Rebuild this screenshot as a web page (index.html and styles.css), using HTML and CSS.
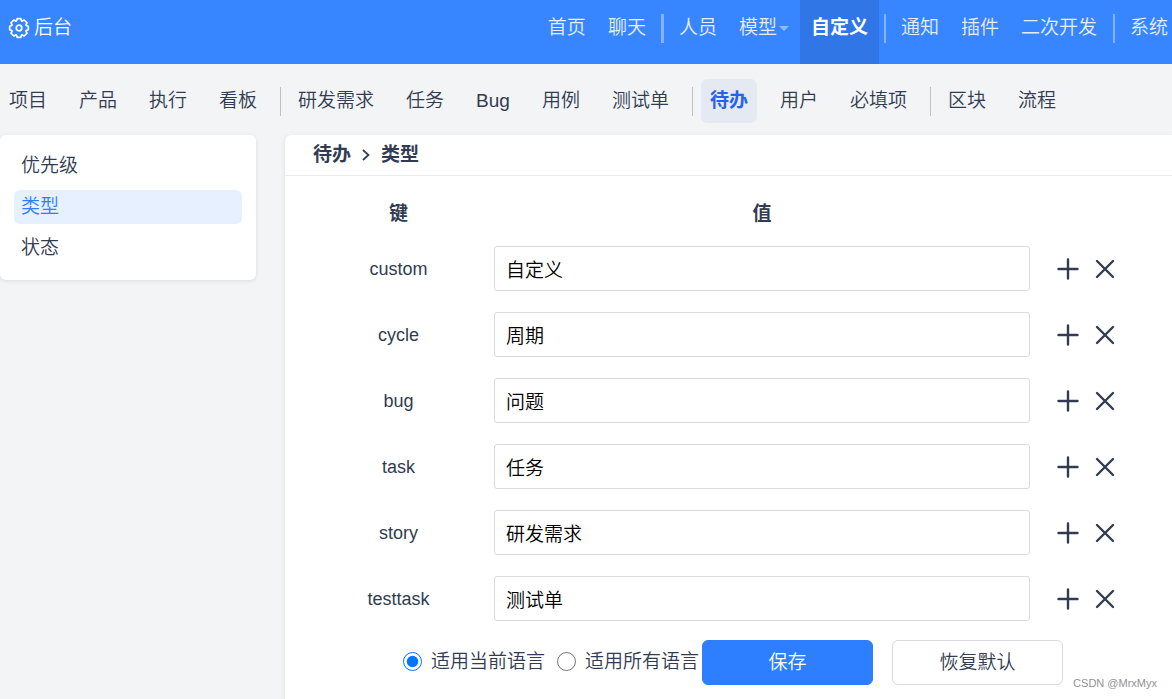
FILE: index.html
```html
<!DOCTYPE html>
<html lang="zh-CN">
<head>
<meta charset="utf-8">
<meta name="viewport" content="width=device-width, initial-scale=1">
<title>后台 - 自定义</title>
<link rel="stylesheet" href="styles.css">
</head>
<body>
<svg class="symbols" aria-hidden="true">
  <symbol id="plus" viewBox="0 0 22 22"><path d="M11 1.500v19M1.500 11h19" fill="none" stroke="currentColor" stroke-width="2.400" stroke-linecap="round"/></symbol>
  <symbol id="close" viewBox="0 0 22 22"><path d="M3 3l16 16M19 3L3 19" fill="none" stroke="currentColor" stroke-width="2.400" stroke-linecap="round"/></symbol>
</svg>
<header class="topbar">
  <a class="brand" href="#">
    <svg class="gear" viewBox="0 0 22 22" aria-hidden="true"><g fill="none" stroke="currentColor" stroke-width="1.700" stroke-linejoin="round"><path d="M8.400 3.900L9.200 1.700H12.800L13.600 3.900L14.200 4.100L16.200 3L19 5.800L17.900 7.800L18.100 8.400L20.300 9.200V12.800L18.100 13.600L17.900 14.200L19 16.200L16.200 19L14.200 17.900L13.600 18.100L12.800 20.300H9.200L8.400 18.100L7.800 17.900L5.800 19L3 16.200L4.100 14.200L3.900 13.600L1.700 12.800V9.200L3.900 8.400L4.100 7.800L3 5.800L5.800 3L7.800 4.100z"/><circle cx="11" cy="11" r="2.800"/></g></svg>
    <span>后台</span>
  </a>
  <nav class="topnav">
    <a href="#">首页</a>
    <a href="#">聊天</a>
    <span class="topsep topsep-wide"></span>
    <a href="#">人员</a>
    <a href="#">模型<i class="caret"></i></a>
    <a href="#" class="active">自定义</a>
    <span class="topsep"></span>
    <a href="#">通知</a>
    <a href="#">插件</a>
    <a href="#">二次开发</a>
    <span class="topsep"></span>
    <a href="#" class="last">系统</a>
  </nav>
</header>
<nav class="subnav">
  <a href="#">项目</a>
  <a href="#">产品</a>
  <a href="#">执行</a>
  <a href="#">看板</a>
  <span class="subsep"></span>
  <a href="#">研发需求</a>
  <a href="#">任务</a>
  <a href="#">Bug</a>
  <a href="#">用例</a>
  <a href="#">测试单</a>
  <span class="subsep"></span>
  <a href="#" class="active">待办</a>
  <a href="#">用户</a>
  <a href="#">必填项</a>
  <span class="subsep"></span>
  <a href="#">区块</a>
  <a href="#">流程</a>
</nav>
<div class="layout">
  <aside class="sidebar">
    <a href="#">优先级</a>
    <a href="#" class="active">类型</a>
    <a href="#">状态</a>
  </aside>
  <main class="panel">
    <h1 class="panel-head">
      <span>待办</span>
      <svg class="chevron" viewBox="0 0 8 12" aria-hidden="true"><path d="M1 1L6.500 6L1 11" fill="none" stroke="currentColor" stroke-width="1.700"/></svg>
      <span>类型</span>
    </h1>
    <form class="panel-body">
      <table class="items">
        <colgroup><col class="col-key"><col><col class="col-actions"></colgroup>
        <thead><tr><th>键</th><th>值</th><td></td></tr></thead>
        <tbody>
          <tr><td class="key"><label for="v1">custom</label></td><td class="value"><input type="text" id="v1" value="自定义"></td><td class="actions"><div><button type="button" aria-label="添加"><svg><use href="#plus"/></svg></button><button type="button" aria-label="删除"><svg><use href="#close"/></svg></button></div></td></tr>
          <tr><td class="key"><label for="v2">cycle</label></td><td class="value"><input type="text" id="v2" value="周期"></td><td class="actions"><div><button type="button" aria-label="添加"><svg><use href="#plus"/></svg></button><button type="button" aria-label="删除"><svg><use href="#close"/></svg></button></div></td></tr>
          <tr><td class="key"><label for="v3">bug</label></td><td class="value"><input type="text" id="v3" value="问题"></td><td class="actions"><div><button type="button" aria-label="添加"><svg><use href="#plus"/></svg></button><button type="button" aria-label="删除"><svg><use href="#close"/></svg></button></div></td></tr>
          <tr><td class="key"><label for="v4">task</label></td><td class="value"><input type="text" id="v4" value="任务"></td><td class="actions"><div><button type="button" aria-label="添加"><svg><use href="#plus"/></svg></button><button type="button" aria-label="删除"><svg><use href="#close"/></svg></button></div></td></tr>
          <tr><td class="key"><label for="v5">story</label></td><td class="value"><input type="text" id="v5" value="研发需求"></td><td class="actions"><div><button type="button" aria-label="添加"><svg><use href="#plus"/></svg></button><button type="button" aria-label="删除"><svg><use href="#close"/></svg></button></div></td></tr>
          <tr><td class="key"><label for="v6">testtask</label></td><td class="value"><input type="text" id="v6" value="测试单"></td><td class="actions"><div><button type="button" aria-label="添加"><svg><use href="#plus"/></svg></button><button type="button" aria-label="删除"><svg><use href="#close"/></svg></button></div></td></tr>
        </tbody>
      </table>
      <div class="form-foot">
        <div class="radios">
          <input type="radio" name="lang" id="lang-current" checked><label for="lang-current">适用当前语言</label>
          <input type="radio" name="lang" id="lang-all"><label for="lang-all">适用所有语言</label>
        </div>
        <button type="submit" class="btn primary">保存</button>
        <button type="button" class="btn">恢复默认</button>
      </div>
    </form>
  </main>
</div>
<span class="watermark">CSDN @MrxMyx</span>
</body>
</html>
```
FILE: styles.css
```css
* { box-sizing: border-box; }

html { height: 100%; }

body {
  margin: 0;
  min-height: 100%;
  display: flex;
  flex-direction: column;
  position: relative;
  overflow-x: hidden;
  background: #f3f4f6;
  color: #313c52;
  font: 350 19px/28px "Liberation Sans", "Noto Sans CJK SC", sans-serif;
}

a { color: inherit; text-decoration: none; white-space: nowrap; }

.symbols { display: none; }

/* Top bar */
.topbar {
  display: flex;
  justify-content: space-between;
  height: 64px;
  background: #3785ff;
  color: #fff;
}

.brand {
  display: flex;
  align-items: center;
  gap: 4px;
  padding: 0 0 8px 8px;
}

.gear { width: 22px; height: 22px; }

.topnav { display: flex; color: #e4eeff; }

.topnav a {
  display: flex;
  align-items: center;
  padding: 0 11px 8px;
}

.topnav .active {
  background: #3076e6;
  color: #fff;
  font-weight: 700;
}

.topnav .last { padding-right: 4px; }

.caret {
  margin: 1px 0 0 2px;
  border: 5px solid transparent;
  border-top-color: #8ebaff;
  border-bottom: 0;
}

.topsep {
  width: 2px;
  height: 29px;
  margin: 14px 4px 0 5px;
  background: #84b4ff;
}

.topsep-wide { width: 3px; margin-left: 4px; }

/* Second level navigation */
.subnav {
  display: flex;
  align-items: center;
  padding: 15px 0 12px;
}

.subnav a {
  margin-right: 14px;
  padding: 8px 9px;
  border-radius: 6px;
}

.subnav .active {
  background: #e5eaf2;
  color: #2463eb;
  font-weight: 700;
}

.subsep {
  width: 1px;
  height: 29px;
  margin-right: 8px;
  background: #bfc1c4;
}

/* Content */
.layout {
  display: flex;
  flex: 1;
  align-items: stretch;
  gap: 29px;
}

.sidebar {
  display: flex;
  flex: 0 0 256px;
  flex-direction: column;
  align-self: flex-start;
  gap: 7px;
  padding: 14px 14px 15px;
  background: #fff;
  border-radius: 6px;
  box-shadow: 0 1px 4px rgba(0, 0, 0, .1);
}

.sidebar a {
  padding: 3px 7px;
  border-radius: 6px;
}

.sidebar .active { background: #e6f0ff; color: #2e7fff; }

.panel {
  flex: 1;
  min-width: 0;
  background: #fff;
  border-radius: 6px 0 0 0;
  box-shadow: 0 1px 4px rgba(0, 0, 0, .1);
}

.panel-head {
  display: flex;
  align-items: center;
  gap: 11px;
  margin: 0;
  padding: 6px 28px;
  border-bottom: 1px solid #eaebed;
  font-size: 19px;
  font-weight: 700;
}

.chevron { width: 8px; height: 12px; }

.panel-body { padding: 14px 28px; }

.items {
  width: 100%;
  table-layout: fixed;
  border-collapse: collapse;
}

.col-key { width: 171px; }
.col-actions { width: 104px; }

.items th { height: 46px; padding: 2px 0 0; }

.items td { padding: 0; }

.key { text-align: center; font-size: 18px; }

.items .value { padding: 10px 10px 11px; }

.value input {
  display: block;
  width: 100%;
  height: 45px;
  padding: 0 11px;
  border: 1px solid #d9dbde;
  border-radius: 3px;
  background: #fff;
  color: #000;
  font: inherit;
}

.actions div { display: flex; gap: 15px; padding-left: 17px; }

.actions button {
  width: 22px;
  height: 22px;
  padding: 0;
  border: 0;
  background: none;
  color: inherit;
}

.actions svg { display: block; width: 22px; height: 22px; }

.form-foot {
  display: flex;
  align-items: center;
  padding: 8px 0 0 90px;
}

.radios {
  display: flex;
  align-items: center;
  margin-right: 3px;
  padding-bottom: 2px;
  white-space: nowrap;
}

.radios input { width: 19px; height: 19px; margin: 0 9px 0 0; }

.radios label + input { margin-left: 12px; }

.btn {
  width: 171px;
  height: 45px;
  margin-right: 19px;
  padding: 0;
  border: 1px solid #d6d9de;
  border-radius: 6px;
  background: #fff;
  color: inherit;
  font: inherit;
}

.btn.primary { border-color: #2e7fff; background: #2e7fff; color: #fff; }

.watermark {
  position: absolute;
  right: 15px;
  bottom: 8px;
  color: #909296;
  font-size: 11px;
  line-height: 16px;
}
```
